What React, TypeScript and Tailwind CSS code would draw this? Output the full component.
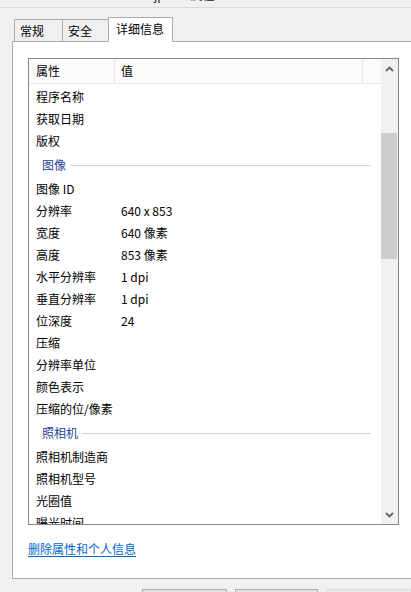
import React from "react";

type Row = { k: string; v?: string } | { group: string };

const rows: Row[] = [
  { k: "程序名称" },
  { k: "获取日期" },
  { k: "版权" },
  { group: "图像" },
  { k: "图像 ID" },
  { k: "分辨率", v: "640 x 853" },
  { k: "宽度", v: "640 像素" },
  { k: "高度", v: "853 像素" },
  { k: "水平分辨率", v: "1 dpi" },
  { k: "垂直分辨率", v: "1 dpi" },
  { k: "位深度", v: "24" },
  { k: "压缩" },
  { k: "分辨率单位" },
  { k: "颜色表示" },
  { k: "压缩的位/像素" },
  { group: "照相机" },
  { k: "照相机制造商" },
  { k: "照相机型号" },
  { k: "光圈值" },
  { k: "曝光时间" },
];

function Chevron({ down }: { down?: boolean }) {
  return (
    <svg width="9" height="6" viewBox="0 0 9 6" className="block">
      <polyline
        points={down ? "1,1 4.5,4.5 8,1" : "1,5 4.5,1.5 8,5"}
        fill="none"
        stroke="#606060"
        strokeWidth="1.8"
      />
    </svg>
  );
}

export default function App() {
  return (
    <div className="w-[411px] h-[592px] overflow-hidden bg-[#f0f0f0] font-['Noto_Sans_CJK_SC','Microsoft_YaHei',sans-serif] text-[12px] text-black">
      {/* title fragment strip */}
      <div className="h-[8px] border-b border-[#dadada] overflow-hidden">
        <div className="h-[4px] overflow-hidden">
          <div className="flex pl-[154px] -mt-[11px] leading-[12px] text-[12px] text-[#222]">
            <span>jp</span>
            <span className="ml-[26px]">属性</span>
          </div>
        </div>
      </div>

      {/* tabs */}
      <div className="relative z-10 h-[33px] flex items-end pl-[14px]">
        <div className="w-[49px] h-[22px] border-l border-t border-r border-[#acacac] bg-[#f0f0f0] flex items-center pl-[5px] leading-none">
          常规
        </div>
        <div className="w-[45px] h-[22px] border-t border-[#acacac] bg-[#f0f0f0] flex items-center pl-[5px] leading-none">
          安全
        </div>
        <div className="w-[65px] h-[25px] -mb-px border-l border-t border-r border-[#acacac] bg-white flex items-center pl-[7px] pb-[2px] leading-none">
          详细信息
        </div>
      </div>

      {/* panel */}
      <div className="ml-[12px] w-[420px] h-[538px] border-l border-t border-b border-[#acacac] bg-white pl-[15px] pt-[16px]">
        {/* listbox */}
        <div className="w-[371px] h-[467px] border border-[#828790] flex bg-white">
          <div className="w-[352px] h-full overflow-hidden flex flex-col">
            {/* header */}
            <div className="h-[25px] shrink-0 flex bg-[#fcfcfc] border-b border-[#e5e9f0]">
              <div className="w-[86px] pl-[7px] border-r border-[#e3e8f1] flex items-center leading-none">
                属性
              </div>
              <div className="w-[248px] pl-[6px] border-r border-[#e3e8f1] flex items-center leading-none">
                值
              </div>
              <div className="flex-1" />
            </div>
            <div className="pt-[2px]">
              {rows.map((r, i) =>
                "group" in r ? (
                  <div key={i} className="h-[26px] flex items-center pl-[13px] pr-[10px]">
                    <span className="text-[#1e3f9c] leading-none">{r.group}</span>
                    <div className="flex-1 h-px bg-[#c9d6ef] ml-[4px]" />
                  </div>
                ) : (
                  <div key={i} className="h-[22px] flex items-center leading-none">
                    <div className="w-[86px] pl-[7px] whitespace-nowrap">{r.k}</div>
                    <div className="pl-[6px] whitespace-nowrap">{r.v ?? ""}</div>
                  </div>
                )
              )}
            </div>
          </div>
          {/* scrollbar */}
          <div className="w-[17px] h-full bg-[#f0f0f0] flex flex-col">
            <div className="h-[17px] flex items-center justify-center pt-[2px]">
              <Chevron />
            </div>
            <div className="h-[57px]" />
            <div className="h-[126px] mr-px bg-[#cdcdcd]" />
            <div className="flex-1" />
            <div className="h-[17px] flex items-center justify-center pb-[2px]">
              <Chevron down />
            </div>
          </div>
        </div>
        <div className="mt-[16px] leading-[16px]">
          <span className="text-[#0066cc] underline underline-offset-[2px]">删除属性和个人信息</span>
        </div>
      </div>

      {/* buttons */}
      <div className="flex pl-[142px] gap-[8px] mt-[10px]">
        <div className="w-[87px] h-[23px] border border-[#adadad] bg-[#e1e1e1]" />
        <div className="w-[86px] h-[23px] border border-[#adadad] bg-[#e1e1e1]" />
        <div className="w-[87px] h-[23px] border border-[#d9d9d9] bg-[#eaeaea]" />
      </div>
    </div>
  );
}
